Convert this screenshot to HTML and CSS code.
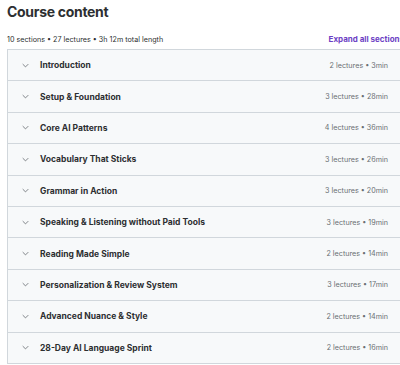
FILE: index.html
```html
<!DOCTYPE html>
<html lang="en">
<head>
    <meta charset="UTF-8">
    <meta name="viewport" content="width=device-width, initial-scale=1.0">
    <title>Course content</title>
    <link rel="stylesheet" href="styles.css">
</head>
<body>
    <div class="curriculum">
        <h2 class="titulo">Course content</h2>
        <div class="resumo">
            <span>10 sections • 27 lectures • 3h 12m total length</span>
            <button class="expandir">Expand all sections</button>
        </div>

        <div class="secoes">
            <div class="secao">
                <span class="seta"><svg viewBox="0 0 10 6" width="7" height="5"><path d="M1 1l4 4 4-4" fill="none" stroke="currentColor" stroke-width="1.2"/></svg></span>
                <span class="nome">Introduction</span>
                <span class="info">2 lectures • 3min</span>
            </div>
            <div class="secao">
                <span class="seta"><svg viewBox="0 0 10 6" width="7" height="5"><path d="M1 1l4 4 4-4" fill="none" stroke="currentColor" stroke-width="1.2"/></svg></span>
                <span class="nome">Setup &amp; Foundation</span>
                <span class="info">3 lectures • 28min</span>
            </div>
            <div class="secao">
                <span class="seta"><svg viewBox="0 0 10 6" width="7" height="5"><path d="M1 1l4 4 4-4" fill="none" stroke="currentColor" stroke-width="1.2"/></svg></span>
                <span class="nome">Core AI Patterns</span>
                <span class="info">4 lectures • 36min</span>
            </div>
            <div class="secao">
                <span class="seta"><svg viewBox="0 0 10 6" width="7" height="5"><path d="M1 1l4 4 4-4" fill="none" stroke="currentColor" stroke-width="1.2"/></svg></span>
                <span class="nome">Vocabulary That Sticks</span>
                <span class="info">3 lectures • 26min</span>
            </div>
            <div class="secao">
                <span class="seta"><svg viewBox="0 0 10 6" width="7" height="5"><path d="M1 1l4 4 4-4" fill="none" stroke="currentColor" stroke-width="1.2"/></svg></span>
                <span class="nome">Grammar in Action</span>
                <span class="info">3 lectures • 20min</span>
            </div>
            <div class="secao">
                <span class="seta"><svg viewBox="0 0 10 6" width="7" height="5"><path d="M1 1l4 4 4-4" fill="none" stroke="currentColor" stroke-width="1.2"/></svg></span>
                <span class="nome">Speaking &amp; Listening without Paid Tools</span>
                <span class="info">3 lectures • 19min</span>
            </div>
            <div class="secao">
                <span class="seta"><svg viewBox="0 0 10 6" width="7" height="5"><path d="M1 1l4 4 4-4" fill="none" stroke="currentColor" stroke-width="1.2"/></svg></span>
                <span class="nome">Reading Made Simple</span>
                <span class="info">2 lectures • 14min</span>
            </div>
            <div class="secao">
                <span class="seta"><svg viewBox="0 0 10 6" width="7" height="5"><path d="M1 1l4 4 4-4" fill="none" stroke="currentColor" stroke-width="1.2"/></svg></span>
                <span class="nome">Personalization &amp; Review System</span>
                <span class="info">3 lectures • 17min</span>
            </div>
            <div class="secao">
                <span class="seta"><svg viewBox="0 0 10 6" width="7" height="5"><path d="M1 1l4 4 4-4" fill="none" stroke="currentColor" stroke-width="1.2"/></svg></span>
                <span class="nome">Advanced Nuance &amp; Style</span>
                <span class="info">2 lectures • 14min</span>
            </div>
            <div class="secao">
                <span class="seta"><svg viewBox="0 0 10 6" width="7" height="5"><path d="M1 1l4 4 4-4" fill="none" stroke="currentColor" stroke-width="1.2"/></svg></span>
                <span class="nome">28-Day AI Language Sprint</span>
                <span class="info">2 lectures • 16min</span>
            </div>
        </div>
    </div>
</body>
</html>
```

FILE: styles.css
```css
body {
    font-family: Inter, "Noto Sans", sans-serif;
    background-color: #fff;
    color: #2d2f31;
    margin: 0;
    padding: 0;
    overflow: hidden;
}

.curriculum {
    width: 400px;
    margin-left: 7px;
}

.titulo {
    font-size: 14px;
    font-weight: 700;
    letter-spacing: -0.3px;
    margin: 3px 0 0;
    line-height: 18px;
}

.resumo {
    display: flex;
    justify-content: space-between;
    align-items: center;
    font-size: 7.2px;
    margin-top: 11px;
    height: 14px;
    padding-bottom: 3px;
}

.expandir {
    font-family: inherit;
    font-size: 8px;
    font-weight: 700;
    color: #6d3fc4;
    background: none;
    border: none;
    padding: 0;
    margin-right: 3px;
    white-space: nowrap;
}

.secoes {
    border: 1px solid #d1d7dc;
    border-bottom: none;
}

.secao {
    display: flex;
    align-items: center;
    height: 30.4px;
    background-color: #f7f9fa;
    border-bottom: 1px solid #d1d7dc;
    padding: 0 18px 0 14px;
}

.seta {
    display: flex;
    color: #6a6f73;
    width: 18px;
}

.nome {
    font-size: 8.5px;
    font-weight: 700;
    flex: 1;
}

.info {
    font-size: 7.2px;
    color: #6a6f73;
}
```
